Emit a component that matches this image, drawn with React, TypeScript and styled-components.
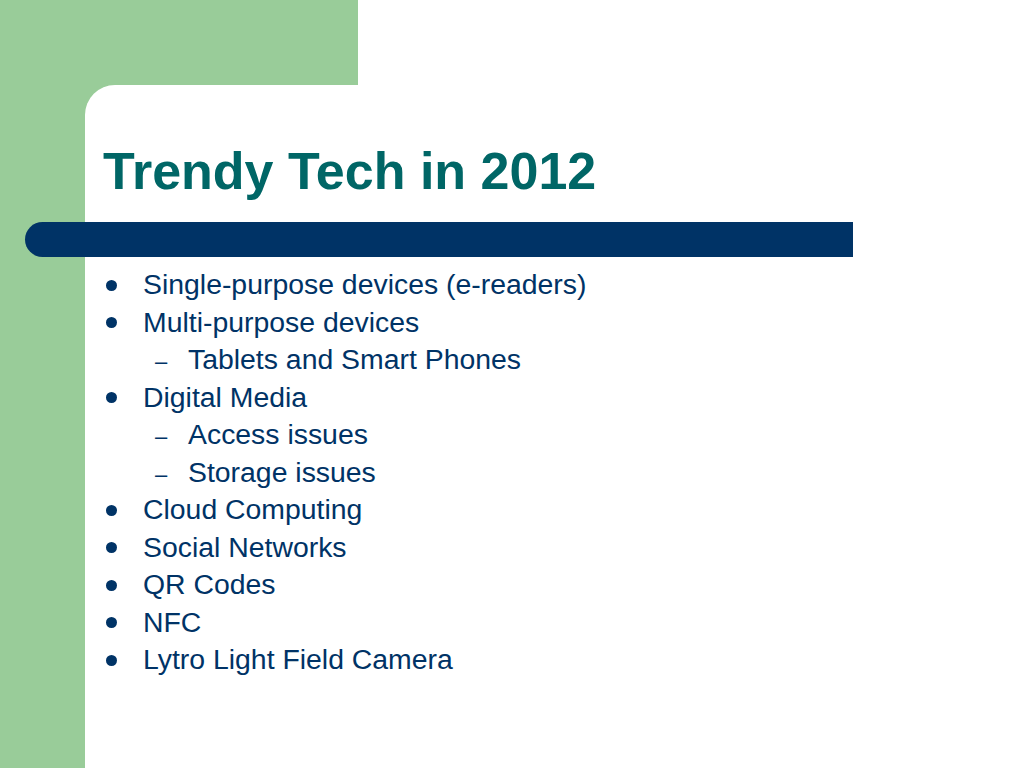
import React from "react";
import styled, { createGlobalStyle } from "styled-components";

const GlobalStyle = createGlobalStyle`
  html, body {
    margin: 0;
    padding: 0;
    background: #ffffff;
  }
  body {
    font-family: "Liberation Sans", Arial, sans-serif;
  }
`;

const Slide = styled.div`
  width: 1024px;
  height: 768px;
  display: grid;
  grid-template-columns: 85px 273px 1fr;
  grid-template-rows: 85px 1fr;
  background: #99cc99;
  overflow: hidden;
`;

const TopRight = styled.div`
  grid-column: 3;
  grid-row: 1;
  background: #ffffff;
`;

const Panel = styled.div`
  grid-column: 2 / 4;
  grid-row: 2;
  background: #ffffff;
  border-top-left-radius: 30px;
  padding-top: 56px;
  display: flex;
  flex-direction: column;
`;

const Title = styled.h1`
  margin: 0;
  padding-left: 18px;
  font-size: 52px;
  line-height: 61px;
  font-weight: bold;
  color: #006666;
`;

const Bar = styled.div`
  margin-top: 20px;
  margin-left: -60px;
  width: 828px;
  height: 35px;
  background: #003366;
  border-radius: 18px 0 0 18px;
`;

const List = styled.ul`
  list-style: none;
  margin: 9px 0 0;
  padding: 0;
`;

const Item = styled.li<{ $level: number }>`
  font-size: 28.4px;
  line-height: 37.5px;
  color: #003366;
  white-space: nowrap;
  padding-left: ${(p) => (p.$level === 1 ? 21 : 70)}px;
`;

const Marker = styled.span<{ $width: number }>`
  display: inline-block;
  width: ${(p) => p.$width}px;
`;

const Dot = styled.span`
  display: inline-block;
  width: 11px;
  height: 11px;
  border-radius: 50%;
  background: #003366;
  margin-bottom: 3.5px;
  vertical-align: baseline;
`;

const Dash = styled.span`
  font-size: 22px;
  line-height: 1;
`;

const items: { level: number; text: string }[] = [
  { level: 1, text: "Single-purpose devices (e-readers)" },
  { level: 1, text: "Multi-purpose devices" },
  { level: 2, text: "Tablets and Smart Phones" },
  { level: 1, text: "Digital Media" },
  { level: 2, text: "Access issues" },
  { level: 2, text: "Storage issues" },
  { level: 1, text: "Cloud Computing" },
  { level: 1, text: "Social Networks" },
  { level: 1, text: "QR Codes" },
  { level: 1, text: "NFC" },
  { level: 1, text: "Lytro Light Field Camera" },
];

export default function App() {
  return (
    <>
      <GlobalStyle />
      <Slide>
        <TopRight />
        <Panel>
          <Title>Trendy Tech in 2012</Title>
          <Bar />
          <List>
            {items.map((it, i) => (
              <Item key={i} $level={it.level}>
                {it.level === 1 ? (
                  <Marker $width={37}>
                    <Dot />
                  </Marker>
                ) : (
                  <Marker $width={33}>
                    <Dash>–</Dash>
                  </Marker>
                )}
                {it.text}
              </Item>
            ))}
          </List>
        </Panel>
      </Slide>
    </>
  );
}
